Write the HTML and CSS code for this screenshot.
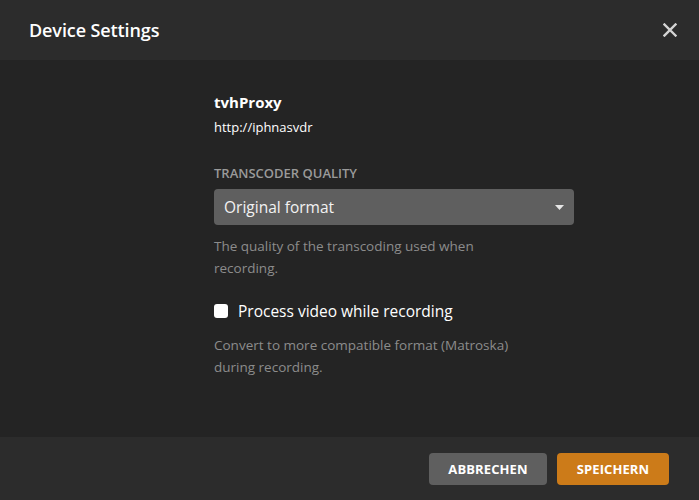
FILE: index.html
```html
<!DOCTYPE html>
<html>
<head>
<meta charset="utf-8">
<link rel="stylesheet" href="styles.css">
</head>
<body>
<div class="modal">
  <header class="head">
    <h1 class="title">Device Settings</h1>
    <button class="close" aria-label="Close">
      <svg width="14" height="14" viewBox="0 0 14 14"><path d="M1.5 1.5 L12.5 12.5 M12.5 1.5 L1.5 12.5" stroke="#d4d4d4" stroke-width="2.4" stroke-linecap="square"/></svg>
    </button>
  </header>
  <main class="body">
    <div class="content">
      <div class="name">tvhProxy</div>
      <div class="url">http://iphnasvdr</div>
      <div class="label">TRANSCODER QUALITY</div>
      <div class="select">
        <span>Original format</span>
        <svg class="caret" width="9" height="5" viewBox="0 0 9 5"><path d="M0 0 H9 L4.5 5 Z" fill="#e6e6e6"/></svg>
      </div>
      <p class="help">The quality of the transcoding used when recording.</p>
      <label class="check">
        <span class="box"></span>
        <span class="check-label">Process video while recording</span>
      </label>
      <p class="help">Convert to more compatible format (Matroska) during recording.</p>
    </div>
  </main>
  <footer class="foot">
    <button class="btn btn-grey">ABBRECHEN</button>
    <button class="btn btn-orange">SPEICHERN</button>
  </footer>
</div>
</body>
</html>
```
FILE: styles.css
```css
* { box-sizing: border-box; }
html, body { margin: 0; padding: 0; }
body {
  width: 699px;
  height: 500px;
  background: #242424;
  font-family: "Open Sans", "Noto Sans", sans-serif;
  color: #eee;
  overflow: hidden;
}
.modal {
  display: flex;
  flex-direction: column;
  height: 500px;
}
.head {
  height: 60px;
  flex: none;
  background: #2c2c2c;
  display: flex;
  align-items: center;
  justify-content: space-between;
  padding: 0 22px 0 29px;
}
.title {
  margin: 0;
  font-size: 18px;
  font-weight: 600;
  color: #ffffff;
  letter-spacing: -0.1px;
}
.close {
  background: none;
  border: 0;
  padding: 0;
  width: 14px;
  height: 14px;
  display: flex;
  cursor: pointer;
}
.body {
  flex: 1;
  background: #242424;
  padding: 32px 0 0 214px;
}
.content {
  width: 360px;
}
.name {
  font-size: 15px;
  font-weight: 700;
  color: #fff;
  line-height: 20px;
}
.url {
  font-size: 13px;
  color: #fff;
  line-height: 20px;
  margin-top: 5px;
}
.label {
  margin-top: 26px;
  font-size: 13px;
  font-weight: 600;
  color: #9a9a9a;
  line-height: 20px;
}
.select {
  margin-top: 6px;
  height: 36px;
  background: #5f5f5f;
  border-radius: 4px;
  display: flex;
  align-items: center;
  justify-content: space-between;
  padding: 0 10px 0 10px;
  font-size: 15.5px;
  color: #f2f2f2;
}
.help {
  margin: 10px 0 0;
  width: 300px;
  font-size: 13.5px;
  line-height: 22px;
  color: #8c8c8c;
}
.check {
  margin-top: 21px;
  display: flex;
  align-items: center;
  gap: 10px;
  height: 22px;
}
.box {
  width: 14px;
  height: 14px;
  background: #fff;
  border-radius: 3px;
}
.check-label {
  font-size: 15.5px;
  color: #fff;
}
.check + .help { margin-top: 12px; }
.foot {
  height: 63px;
  flex: none;
  background: #2c2c2c;
  display: flex;
  align-items: center;
  justify-content: flex-end;
  gap: 10px;
  padding: 0 30px 0 0;
}
.btn {
  height: 32px;
  border: 0;
  border-radius: 4px;
  font-family: inherit;
  font-size: 13px;
  font-weight: 700;
  color: #fff;
  letter-spacing: 0.1px;
}
.btn-grey { width: 118px; background: #5f5f5f; }
.btn-orange { width: 112px; background: #cc7b19; }
```
